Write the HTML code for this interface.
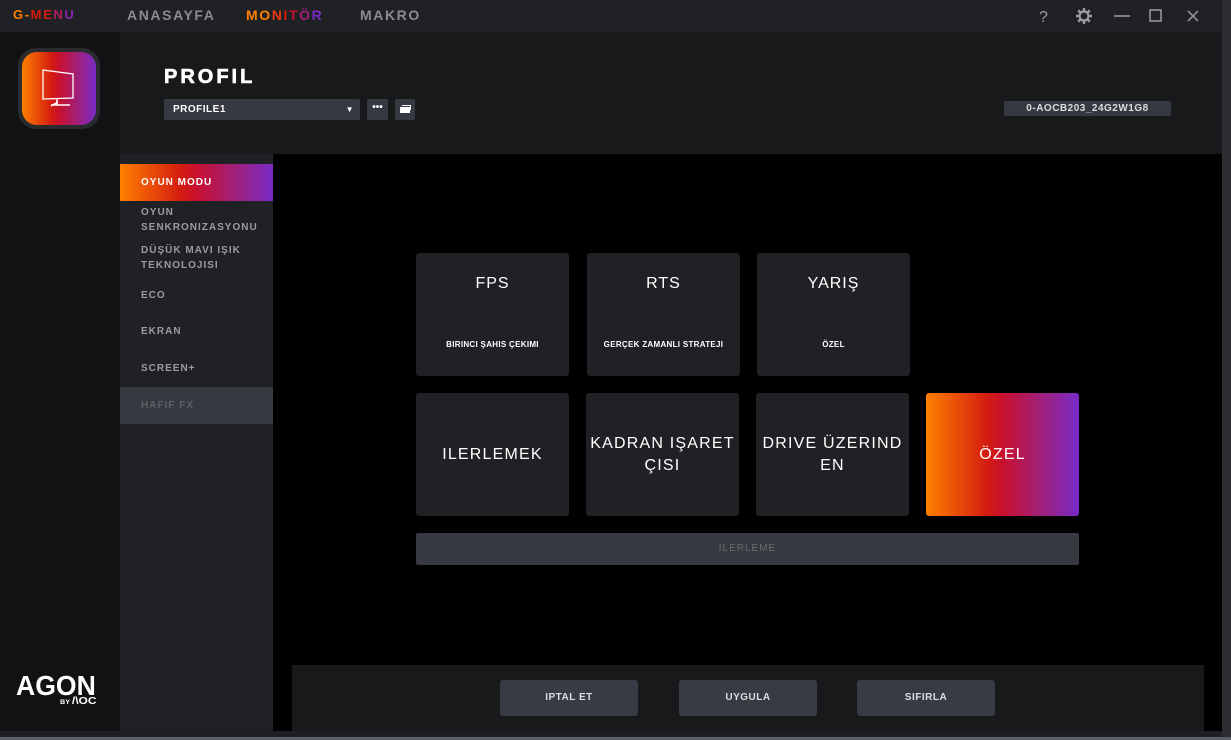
<!DOCTYPE html>
<html><head><meta charset="utf-8"><style>
*{margin:0;padding:0;box-sizing:border-box}
body{width:1231px;height:740px;overflow:hidden;background:#1e1f22;font-family:"Liberation Sans",sans-serif;position:relative;color:#fff}
.a{position:absolute}
.grad{background:linear-gradient(90deg,#ff8000 0%,#d41c10 40%,#c8102e 50%,#a0207a 75%,#7a2ac8 100%)}
.nav{top:7px;font-size:14px;font-weight:bold;letter-spacing:1.6px;color:#8a8c90}
.menu{left:141px;font-size:10px;font-weight:bold;letter-spacing:1px;color:#9a9ca0;line-height:15px}
.tile{background:#202124;border-radius:3px;position:absolute;width:153px;height:123px;text-align:center}
.tile .t{position:absolute;top:22px;left:0;right:0;font-size:16px;letter-spacing:1px}
.tile .s{position:absolute;top:87px;left:0;right:0;font-size:8px;font-weight:bold;letter-spacing:.3px}
.big{display:flex;align-items:center;justify-content:center;font-size:16px;letter-spacing:1.2px;line-height:22px;padding:0 2px;word-break:break-all}
.btn{position:absolute;top:680px;width:138px;height:36px;background:#383b43;border-radius:3px;font-size:10px;font-weight:bold;letter-spacing:.5px;color:#ddd;text-align:center;line-height:36px}
</style></head><body>
<div class="a" style="left:0;top:0;width:1222px;height:32px;background:#1f2124"></div>
<div class="a nav" style="left:13px;font-size:13px"><span style="color:#ff8000">G-</span><span style="color:#d41c10">ME</span><span style="color:#b01e60">N</span><span style="color:#8a24b0">U</span></div>
<div class="a nav" style="left:127px">ANASAYFA</div>
<div class="a nav" style="left:246px"><span style="color:#ff8000">MO</span><span style="color:#e83a10">N</span><span style="color:#d41c10">I</span><span style="color:#c8102e">T</span><span style="color:#a0207a">Ö</span><span style="color:#7a2ac8">R</span></div>
<div class="a nav" style="left:360px">MAKRO</div>
<svg class="a" style="left:1030px;top:6px" width="190" height="20" viewBox="0 0 190 20">
<text x="9" y="16" font-size="16" fill="#9a9ca0" font-family="Liberation Sans">?</text>
<g transform="translate(54,10)" fill="none" stroke="#9a9ca0" stroke-width="2.2"><circle r="4.5"/><g stroke-width="2.5"><path d="M0-8V-5M0 5V8M-8 0H-5M5 0H8M-5.7-5.7L-3.8-3.8M3.8 3.8L5.7 5.7M-5.7 5.7L-3.8 3.8M3.8-3.8L5.7-5.7"/></g></g>
<path d="M84 10H100" stroke="#9a9ca0" stroke-width="1.5"/>
<rect x="120" y="4" width="11" height="11" fill="none" stroke="#9a9ca0" stroke-width="1.5"/>
<path d="M158 5L168 15M168 5L158 15" stroke="#9a9ca0" stroke-width="1.5"/>
</svg>
<div class="a" style="left:1222px;top:0;width:9px;height:740px;background:#2b2d31"></div>
<div class="a" style="left:0;top:32px;width:120px;height:699px;background:#111214"></div>
<div class="a" style="left:18px;top:48px;width:82px;height:81px;border-radius:18px;background:#2a2b2e"></div>
<div class="a grad" style="left:22px;top:52px;width:74px;height:73px;border-radius:15px"></div>
<svg class="a" style="left:40px;top:67px" width="36" height="40" viewBox="0 0 36 40"><path d="M3 3L33 7V31L3 32Z" fill="none" stroke="#fff" stroke-width="1.3"/><path d="M17 31V38M11 38H30M11 39L18 35" stroke="#fff" stroke-width="1.5"/></svg>
<div class="a" style="left:16px;top:670px;font-size:28px;font-weight:bold;letter-spacing:0px;transform:scaleX(0.95);transform-origin:left">AGON</div>
<div class="a" style="left:60px;top:696px;font-size:10px;font-weight:bold;transform:scaleX(1.2);transform-origin:left"><span style="font-size:6px">BY </span>/\OC</div>
<div class="a" style="left:120px;top:32px;width:1102px;height:122px;background:#18191b"></div>
<div class="a" style="left:164px;top:66px;font-size:20px;font-weight:900;letter-spacing:3px;-webkit-text-stroke:0.6px #fff">PROFIL</div>
<div class="a" style="left:164px;top:99px;width:196px;height:21px;background:#363942;border-radius:2px;font-size:10px;font-weight:bold;line-height:21px;padding-left:9px;letter-spacing:.5px">PROFILE1<span style="position:absolute;right:6px;font-size:8px">▼</span></div>
<div class="a" style="left:367px;top:99px;width:21px;height:21px;background:#363942;border-radius:2px;font-size:10px;text-align:center;line-height:18px;font-weight:bold">•••</div>
<div class="a" style="left:395px;top:99px;width:20px;height:21px;background:#363942;border-radius:2px"><svg width="20" height="21"><rect x="5" y="8" width="10" height="6" fill="#fff"/><path d="M7 6.5H15.5V11" stroke="#fff" fill="none"/></svg></div>
<div class="a" style="left:1004px;top:101px;width:167px;height:15px;background:#363942;border-radius:2px;font-size:10px;font-weight:bold;text-align:center;line-height:15px;color:#ddd;letter-spacing:.5px">0-AOCB203_24G2W1G8</div>
<div class="a" style="left:120px;top:154px;width:153px;height:577px;background:#202124"></div>
<div class="a grad" style="left:120px;top:164px;width:153px;height:37px"></div>
<div class="a menu" style="top:175px;color:#fff">OYUN MODU</div>
<div class="a menu" style="top:205px;white-space:nowrap;width:130px;overflow:hidden">OYUN<br>SENKRONIZASYONU</div>
<div class="a menu" style="top:243px">DÜŞÜK MAVI IŞIK<br>TEKNOLOJISI</div>
<div class="a menu" style="top:288px">ECO</div>
<div class="a menu" style="top:324px">EKRAN</div>
<div class="a menu" style="top:361px">SCREEN+</div>
<div class="a" style="left:120px;top:387px;width:153px;height:37px;background:#363940"></div>
<div class="a menu" style="top:398px;color:#5e6066">HAFIF FX</div>
<div class="a" style="left:273px;top:154px;width:949px;height:577px;background:#000"></div>
<div class="tile" style="left:416px;top:253px"><div class="t">FPS</div><div class="s">BIRINCI ŞAHIS ÇEKIMI</div></div>
<div class="tile" style="left:587px;top:253px"><div class="t">RTS</div><div class="s">GERÇEK ZAMANLI STRATEJI</div></div>
<div class="tile" style="left:757px;top:253px"><div class="t">YARIŞ</div><div class="s">ÖZEL</div></div>
<div class="tile big" style="left:416px;top:393px">ILERLEMEK</div>
<div class="tile big" style="left:586px;top:393px;word-break:normal">KADRAN IŞARET<br>ÇISI</div>
<div class="tile big" style="left:756px;top:393px;word-break:normal">DRIVE ÜZERIND<br>EN</div>
<div class="tile big" style="left:926px;top:393px;background:linear-gradient(90deg,#ff8000 0%,#d41c10 40%,#c8102e 50%,#a0207a 75%,#7a2ac8 100%)">ÖZEL</div>
<div class="a" style="left:416px;top:533px;width:663px;height:32px;background:#363940;border-radius:2px;text-align:center;line-height:32px;font-size:10px;letter-spacing:1px;color:#6a6c70">ILERLEME</div>
<div class="a" style="left:292px;top:665px;width:912px;height:66px;background:#18191b"></div>
<div class="btn" style="left:500px">IPTAL ET</div>
<div class="btn" style="left:679px">UYGULA</div>
<div class="btn" style="left:857px">SIFIRLA</div>
<div class="a" style="left:0;top:737px;width:1231px;height:3px;background:#5a6069"></div>
</body></html>
